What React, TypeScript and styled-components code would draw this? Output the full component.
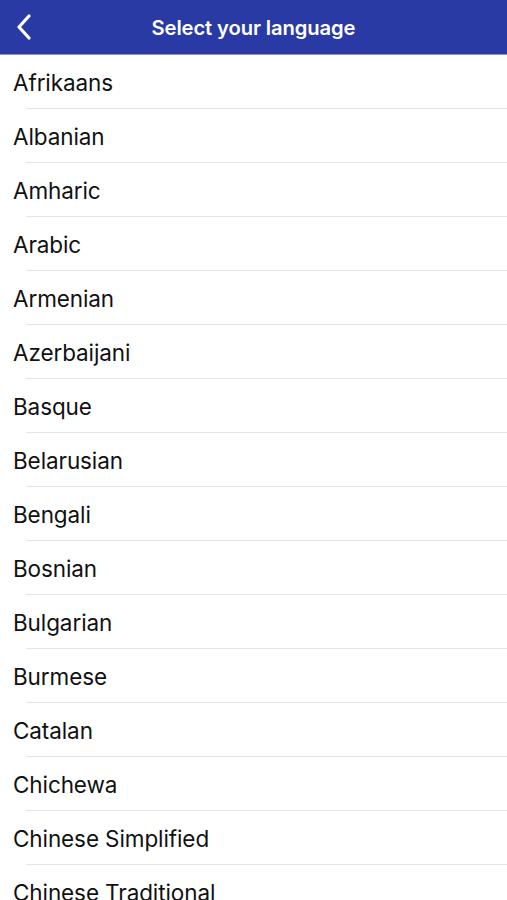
import styled, { createGlobalStyle } from "styled-components";

const GlobalStyle = createGlobalStyle`
  html, body {
    margin: 0;
    padding: 0;
    background: #ffffff;
    font-family: Inter, "Liberation Sans", sans-serif;
  }
`;

const Screen = styled.div`
  width: 507px;
  height: 900px;
  overflow: hidden;
  background: #fff;
`;

const Header = styled.header`
  height: 54px;
  background: #293aa5;
  border-bottom: 1px solid #8c95c8;
  display: flex;
  align-items: center;
  justify-content: center;
  position: relative;
`;

const BackButton = styled.button`
  position: absolute;
  left: 12px;
  top: 13px;
  width: 24px;
  height: 28px;
  padding: 0;
  border: none;
  background: none;
  display: flex;
  align-items: center;
  justify-content: center;
`;

const Title = styled.h1`
  margin: 0;
  color: #fff;
  font-size: 20.2px;
  font-weight: 600;
  letter-spacing: -0.1px;
`;

const List = styled.ul`
  list-style: none;
  margin: 0;
  padding: 0;
`;

const Row = styled.li`
  height: 54px;
  display: flex;
  align-items: center;
  padding-left: 13px;
  position: relative;
  font-size: 22.5px;
  font-weight: 400;
  color: #111;
  letter-spacing: -0.1px;

  &::after {
    content: "";
    position: absolute;
    left: 26px;
    right: 0;
    bottom: 0;
    height: 1px;
    background: #e4e4e6;
  }
`;

const languages = [
  "Afrikaans",
  "Albanian",
  "Amharic",
  "Arabic",
  "Armenian",
  "Azerbaijani",
  "Basque",
  "Belarusian",
  "Bengali",
  "Bosnian",
  "Bulgarian",
  "Burmese",
  "Catalan",
  "Chichewa",
  "Chinese Simplified",
  "Chinese Traditional",
];

const App = () => {
  return (
    <Screen>
      <GlobalStyle />
      <Header>
        <BackButton aria-label="Back">
          <svg width="16" height="26" viewBox="0 0 16 26">
            <path
              d="M13 2 L3 13 L13 24"
              fill="none"
              stroke="#fff"
              strokeWidth="3.2"
              strokeLinecap="round"
              strokeLinejoin="round"
            />
          </svg>
        </BackButton>
        <Title>Select your language</Title>
      </Header>
      <List>
        {languages.map((lang) => (
          <Row key={lang}>{lang}</Row>
        ))}
      </List>
    </Screen>
  );
};

export default App;
